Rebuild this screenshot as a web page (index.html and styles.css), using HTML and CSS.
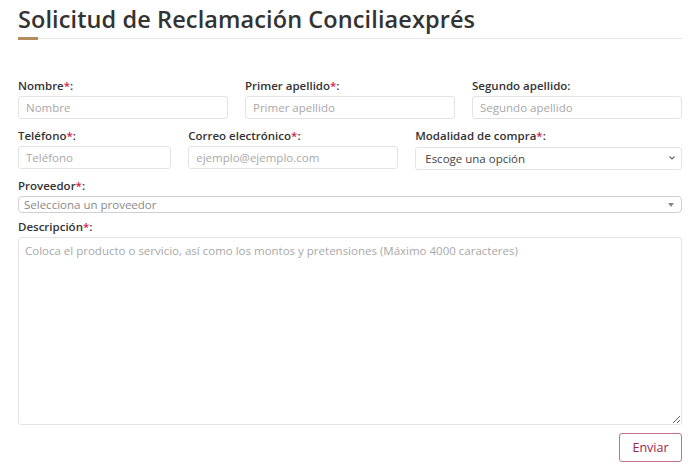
FILE: index.html
```html
<!DOCTYPE html>
<html lang="es">
<head>
<meta charset="utf-8">
<title>Solicitud de Reclamación Conciliaexprés</title>
<link rel="stylesheet" href="styles.css">
</head>
<body>
<main class="page">
  <h1 class="title">Solicitud de Reclamación Conciliaexprés</h1>
  <div class="rule"><span class="rule-accent"></span></div>

  <form class="form">
    <div class="field span-4">
      <label class="label">Nombre<span class="req">*</span>:</label>
      <input class="input" type="text" placeholder="Nombre">
    </div>
    <div class="field span-4">
      <label class="label">Primer apellido<span class="req">*</span>:</label>
      <input class="input" type="text" placeholder="Primer apellido">
    </div>
    <div class="field span-4">
      <label class="label">Segundo apellido:</label>
      <input class="input" type="text" placeholder="Segundo apellido">
    </div>

    <div class="field span-3">
      <label class="label">Teléfono<span class="req">*</span>:</label>
      <input class="input" type="text" placeholder="Teléfono">
    </div>
    <div class="field span-4">
      <label class="label">Correo electrónico<span class="req">*</span>:</label>
      <input class="input" type="text" placeholder="ejemplo@ejemplo.com">
    </div>
    <div class="field span-5">
      <label class="label">Modalidad de compra<span class="req">*</span>:</label>
      <div class="select-wrap">
        <select class="input select">
          <option>Escoge una opción</option>
        </select>
        <svg class="chevron" width="8" height="6" viewBox="0 0 8 6"><path d="M1.5 1.5 L4 4 L6.5 1.5" fill="none" stroke="#666" stroke-width="1.1"/></svg>
      </div>
    </div>

    <div class="field span-12 prov">
      <label class="label">Proveedor<span class="req">*</span>:</label>
      <div class="select2">
        <span class="select2-text">Selecciona un proveedor</span>
        <svg class="caret" width="6" height="4" viewBox="0 0 6 4"><path d="M0 0 L6 0 L3 4 Z" fill="#888"/></svg>
      </div>
    </div>

    <div class="field span-12 desc">
      <label class="label">Descripción<span class="req">*</span>:</label>
      <textarea class="input textarea" placeholder="Coloca el producto o servicio, así como los montos y pretensiones (Máximo 4000 caracteres)"></textarea>
    </div>

    <div class="actions span-12">
      <button class="btn" type="button">Enviar</button>
    </div>
  </form>
</main>
</body>
</html>
```

FILE: styles.css
```css
* { box-sizing: border-box; }

body {
  margin: 0;
  background: #ffffff;
  font-family: "Open Sans", "DejaVu Sans", sans-serif;
  color: #333333;
}

.page {
  padding: 4px 18px 0 18px;
}

.title {
  margin: 0;
  font-size: 23.5px;
  font-weight: 600;
  line-height: 30px;
  color: #333333;
  letter-spacing: 0.1px;
}

.rule {
  margin-top: 4px;
  height: 1px;
  background: #e6e6e6;
  position: relative;
}

.rule-accent {
  position: absolute;
  left: 0;
  top: -1px;
  width: 20px;
  height: 3px;
  background: #b38e5d;
}

.form {
  display: grid;
  grid-template-columns: repeat(12, 1fr);
  column-gap: 17px;
  row-gap: 9px;
  margin-top: 39px;
}

.span-3 { grid-column: span 3; }
.span-4 { grid-column: span 4; }
.span-5 { grid-column: span 5; }
.span-12 { grid-column: span 12; }

.field {
  display: flex;
  flex-direction: column;
  gap: 2px;
}

.prov {
  margin-top: -1px;
}

.desc {
  margin-top: -3px;
}

.label {
  font-size: 11.5px;
  font-weight: 600;
  line-height: 16px;
  color: #333333;
}

.req { color: #d4204a; }

.input {
  height: 23px;
  border: 1px solid #e3e3e3;
  border-radius: 3px;
  padding: 0 7px;
  font-family: inherit;
  font-size: 11.5px;
  color: #555;
  background: #fff;
  outline: none;
}

.input::placeholder { color: #a8a8a8; }

.select-wrap {
  position: relative;
}

.select {
  width: 100%;
  appearance: none;
  -webkit-appearance: none;
  color: #444;
  padding-left: 9px;
}

.chevron {
  position: absolute;
  right: 6px;
  top: 9px;
}

.select2 {
  height: 17px;
  border: 1px solid #d0d0d0;
  border-radius: 4px;
  display: flex;
  align-items: center;
  justify-content: space-between;
  padding: 0 7px 0 5px;
  font-size: 11.5px;
  color: #8a8a8a;
}

.textarea {
  height: 188px;
  padding: 5px 6px;
  resize: vertical;
  line-height: 16px;
}

.actions {
  display: flex;
  justify-content: flex-end;
  margin-top: -1px;
}

.btn {
  width: 63px;
  height: 29px;
  border: 1.5px solid #c0708a;
  border-radius: 3px;
  background: #fff;
  color: #9d2449;
  font-family: inherit;
  font-size: 12.5px;
}
```
